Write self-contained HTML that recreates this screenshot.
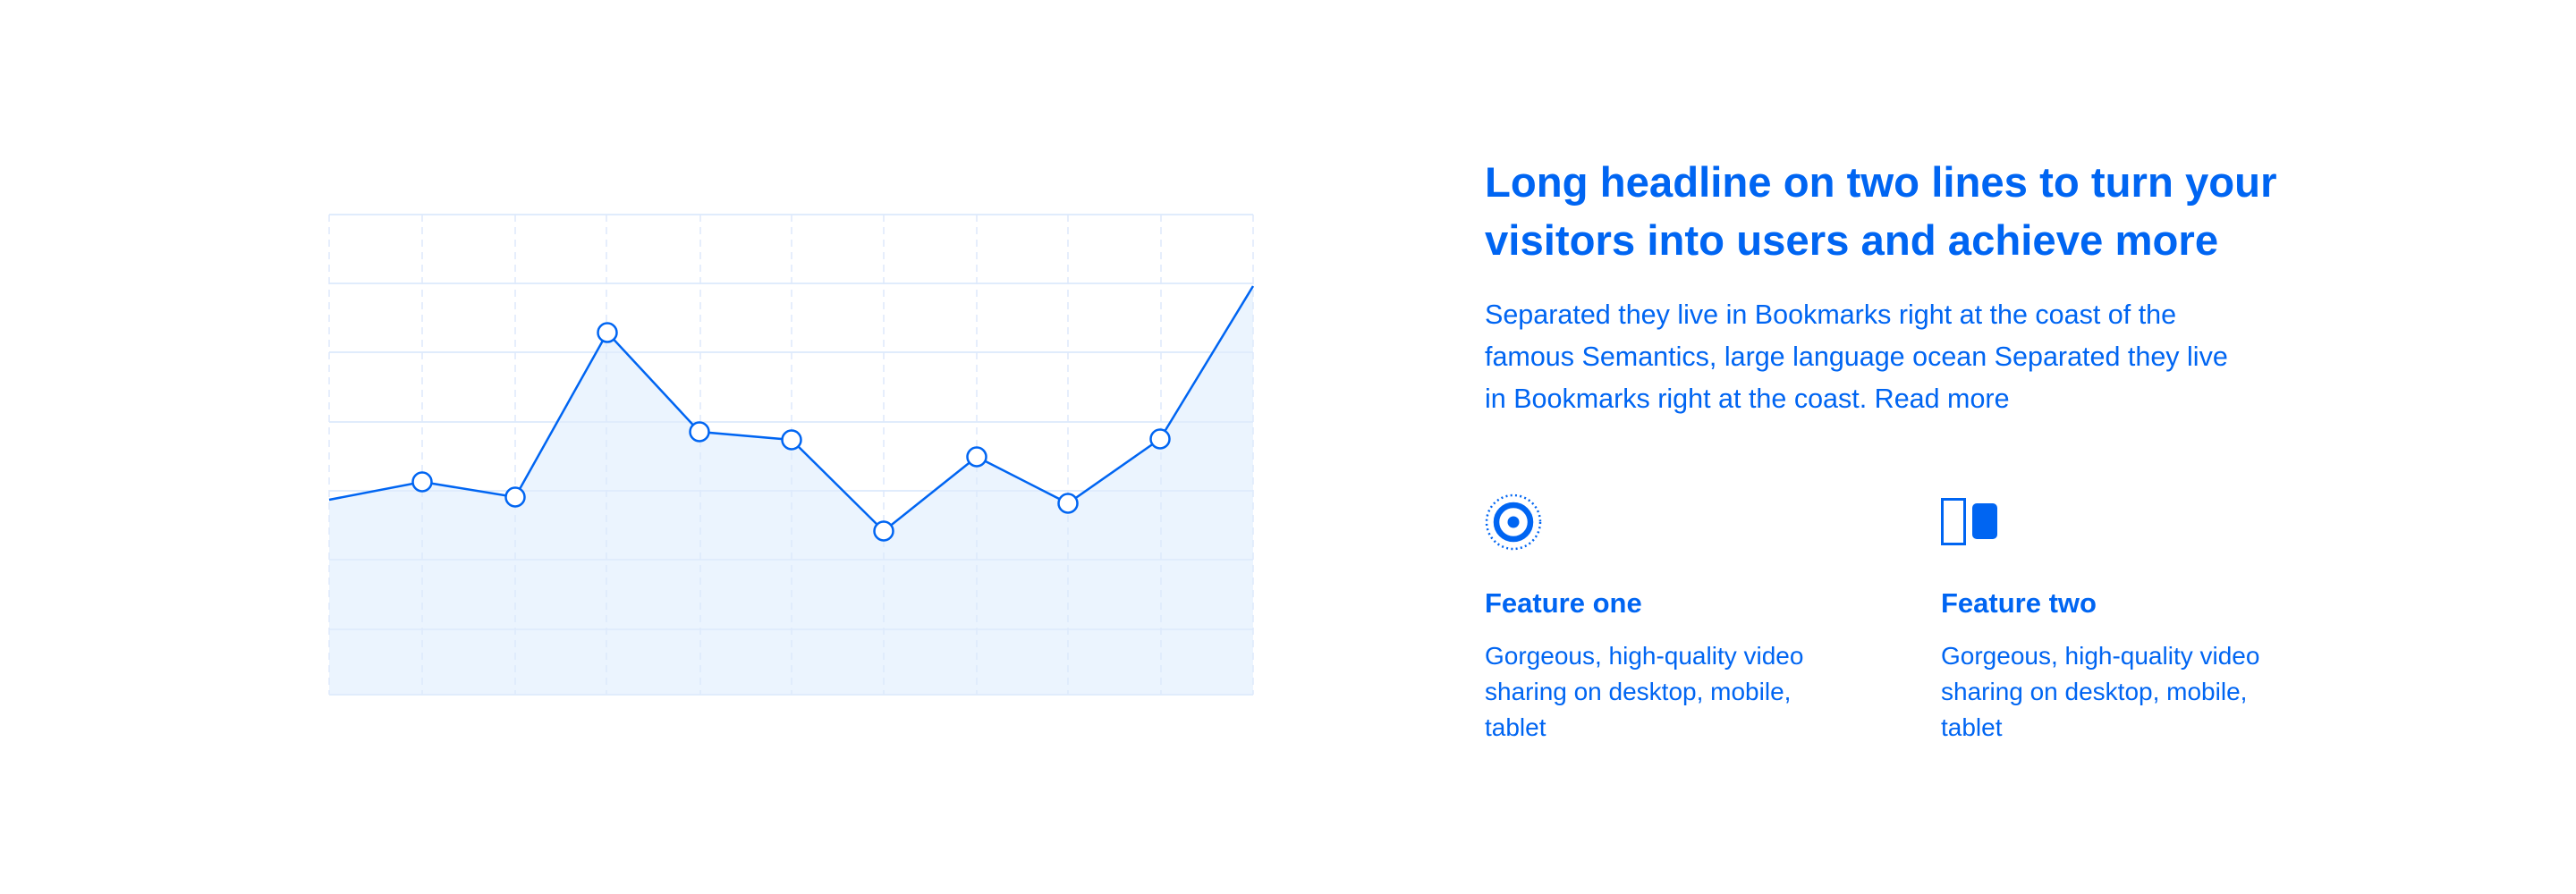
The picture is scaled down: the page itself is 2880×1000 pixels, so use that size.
<!DOCTYPE html>
<html><head><meta charset="utf-8"><style>
html,body{margin:0;padding:0;background:#fff;}
body{width:2880px;height:1000px;position:relative;overflow:hidden;font-family:"Liberation Sans",Arial,sans-serif;color:#0065f2;}
.a{position:absolute;margin:0;}
h1{font-size:47.3px;line-height:65px;font-weight:bold;letter-spacing:0;}
.p{font-size:30.5px;line-height:47px;}
.ft{font-size:31px;line-height:40px;font-weight:bold;}
.fd{font-size:28px;line-height:40px;width:460px;}
</style></head><body>
<svg class="a" style="left:0;top:0" width="1500" height="1000">
<polygon fill="#ebf4fe" points="368,559 472,539 576,556 679,372 782,483 885,492 988,594 1092,511 1194,563 1297,491 1401,320 1401,777 368,777"/>
<g stroke="#e0ecfc" stroke-width="2">
<line x1="368" y1="240" x2="1401" y2="240"/>
<line x1="368" y1="317" x2="1401" y2="317"/>
<line x1="368" y1="394" x2="1401" y2="394"/>
<line x1="368" y1="472" x2="1401" y2="472"/>
<line x1="368" y1="549" x2="1401" y2="549"/>
<line x1="368" y1="626" x2="1401" y2="626"/>
<line x1="368" y1="704" x2="1401" y2="704"/>
<line x1="368" y1="777" x2="1401" y2="777"/>
</g>
<g stroke="#dde9fb" stroke-width="1.5" stroke-dasharray="8 6">
<line x1="368" y1="240" x2="368" y2="777"/>
<line x1="472" y1="240" x2="472" y2="777"/>
<line x1="576" y1="240" x2="576" y2="777"/>
<line x1="678" y1="240" x2="678" y2="777"/>
<line x1="783" y1="240" x2="783" y2="777"/>
<line x1="885" y1="240" x2="885" y2="777"/>
<line x1="988" y1="240" x2="988" y2="777"/>
<line x1="1092" y1="240" x2="1092" y2="777"/>
<line x1="1194" y1="240" x2="1194" y2="777"/>
<line x1="1298" y1="240" x2="1298" y2="777"/>
<line x1="1401" y1="240" x2="1401" y2="777"/>
</g>
<polyline fill="none" stroke="#0065f2" stroke-width="2.5" points="368,559 472,539 576,556 679,372 782,483 885,492 988,594 1092,511 1194,563 1297,491 1401,320"/>
<g fill="#fff" stroke="#0065f2" stroke-width="2.5">
<circle cx="472" cy="539" r="10.5"/>
<circle cx="576" cy="556" r="10.5"/>
<circle cx="679" cy="372" r="10.5"/>
<circle cx="782" cy="483" r="10.5"/>
<circle cx="885" cy="492" r="10.5"/>
<circle cx="988" cy="594" r="10.5"/>
<circle cx="1092" cy="511" r="10.5"/>
<circle cx="1194" cy="563" r="10.5"/>
<circle cx="1297" cy="491" r="10.5"/>
</g>
</svg>

<h1 class="a" style="left:1660px;top:172px;width:1100px;">Long headline on two lines to turn your<br>visitors into users and achieve more</h1>
<p class="a p" style="left:1660px;top:329px;width:1000px;">Separated they live in Bookmarks right at the coast of the<br>famous Semantics, large language ocean Separated they live<br>in Bookmarks right at the coast. Read more</p>

<svg class="a" style="left:1656px;top:548px" width="72" height="72">
<circle cx="36" cy="36" r="30" fill="none" stroke="#0065f2" stroke-width="2.5" stroke-dasharray="2 3.3"/>
<circle cx="36" cy="36" r="19" fill="none" stroke="#0065f2" stroke-width="6.5"/>
<circle cx="36" cy="36" r="6.5" fill="#0065f2"/>
</svg>
<p class="a ft" style="left:1660px;top:655px;">Feature one</p>
<p class="a fd" style="left:1660px;top:714px;">Gorgeous, high-quality video<br>sharing on desktop, mobile,<br>tablet</p>

<svg class="a" style="left:2168px;top:555px" width="70" height="58">
<rect x="3.5" y="3.5" width="25" height="50" fill="none" stroke="#0065f2" stroke-width="3"/>
<rect x="37" y="8" width="28" height="40" rx="5" fill="#0065f2"/>
</svg>
<p class="a ft" style="left:2170px;top:655px;">Feature two</p>
<p class="a fd" style="left:2170px;top:714px;">Gorgeous, high-quality video<br>sharing on desktop, mobile,<br>tablet</p>
</body></html>
